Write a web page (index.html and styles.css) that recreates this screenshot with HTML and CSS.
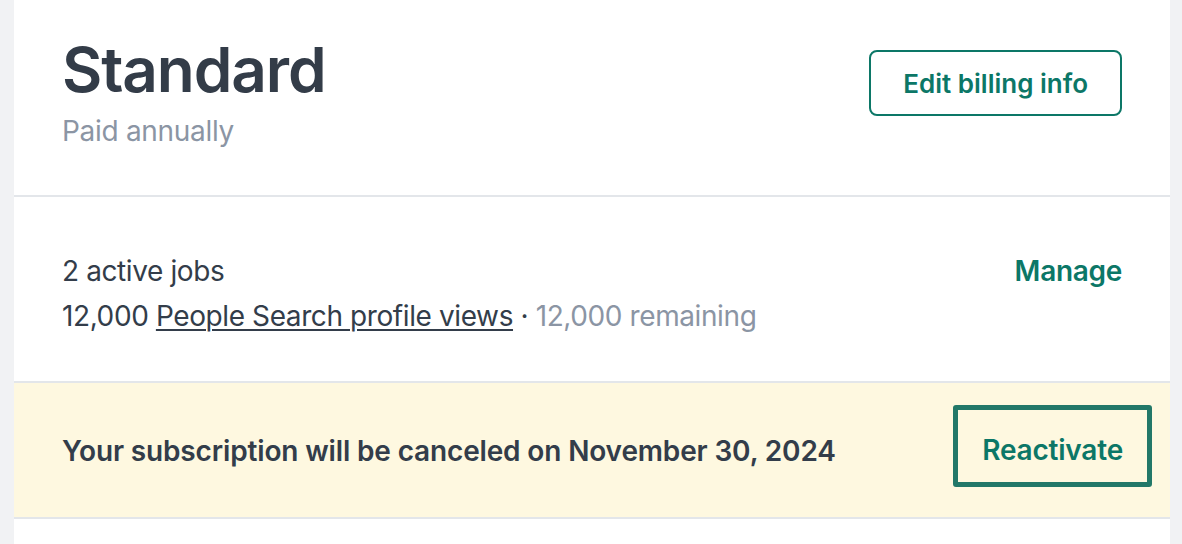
FILE: index.html
```html
<!DOCTYPE html>
<html lang="en">
<head>
<meta charset="utf-8">
<title>Subscription</title>
<link rel="stylesheet" href="styles.css">
</head>
<body>
<div class="page">
  <div class="card">
    <section class="plan-header">
      <div class="plan-title">
        <h1 class="plan-name">Standard</h1>
        <p class="plan-period">Paid annually</p>
      </div>
      <button class="btn-outline" type="button">Edit billing info</button>
    </section>
    <section class="usage">
      <div class="usage-lines">
        <p class="usage-line">2 active jobs</p>
        <p class="usage-line">12,000 <a class="usage-link" href="#">People Search profile views</a> · <span class="muted">12,000 remaining</span></p>
      </div>
      <a class="text-action" href="#">Manage</a>
    </section>
    <section class="notice">
      <p class="notice-text">Your subscription will be canceled on November 30, 2024</p>
      <button class="btn-focus" type="button">Reactivate</button>
    </section>
    <section class="after"></section>
  </div>
</div>
</body>
</html>
```
FILE: styles.css
```css
* { box-sizing: border-box; }
html, body { margin: 0; padding: 0; }
body {
  background: #f1f2f4;
  font-family: Inter, "Noto Sans", "Liberation Sans", sans-serif;
  color: #333d4a;
}
.page {
  padding: 0 12px 0 14px;
  height: 544px;
  overflow: hidden;
}
.card {
  background: #ffffff;
  height: 100%;
}
.plan-header {
  display: flex;
  justify-content: space-between;
  align-items: flex-start;
  padding: 34px 48px 44px 48px;
  border-bottom: 2px solid #e3e6ea;
}
.plan-name {
  margin: 0;
  font-size: 62px;
  line-height: 72px;
  font-weight: 600;
  color: #333c48;
  letter-spacing: -1.1px;
}
.plan-period {
  margin: 5px 0 0 0;
  font-size: 28px;
  line-height: 40px;
  color: #8b95a4;
  letter-spacing: -0.3px;
}
.btn-outline {
  margin-top: 16px;
  height: 66px;
  padding: 0 32px;
  border: 2px solid #0c7767;
  border-radius: 8px;
  background: #fff;
  color: #0c7767;
  font-family: inherit;
  font-size: 26px;
  font-weight: 600;
}
.usage {
  display: flex;
  justify-content: space-between;
  align-items: flex-start;
  padding: 52px 48px 42px 48px;
  border-bottom: 2px solid #e3e6ea;
}
.usage-line {
  margin: 0;
  font-size: 28px;
  line-height: 45px;
  letter-spacing: -0.4px;
}
.usage-link {
  color: #333d4a;
  text-decoration: underline;
  text-decoration-thickness: 2px;
  text-underline-offset: 3px;
}
.muted { color: #8b95a4; }
.text-action {
  color: #0c7767;
  text-decoration: none;
  font-size: 28px;
  line-height: 45px;
  font-weight: 600;
  letter-spacing: -0.3px;
}
.notice {
  display: flex;
  justify-content: space-between;
  align-items: center;
  height: 136px;
  padding: 2px 48px 0 48px;
  background: #fef8e0;
  border-bottom: 2px solid #e3e6ea;
}
.notice-text {
  margin: 0;
  font-size: 28px;
  line-height: 44.8px;
  font-weight: 600;
  letter-spacing: -0.15px;
}
.btn-focus {
  margin: 0 -30px 10px 0;
  height: 82px;
  padding: 8px 24px 0 24px;
  border: 5px solid #227868;
  border-radius: 3px;
  background: transparent;
  color: #0c7767;
  font-family: inherit;
  font-size: 28px;
  line-height: 64px;
  font-weight: 600;
  letter-spacing: -0.2px;
}
```
